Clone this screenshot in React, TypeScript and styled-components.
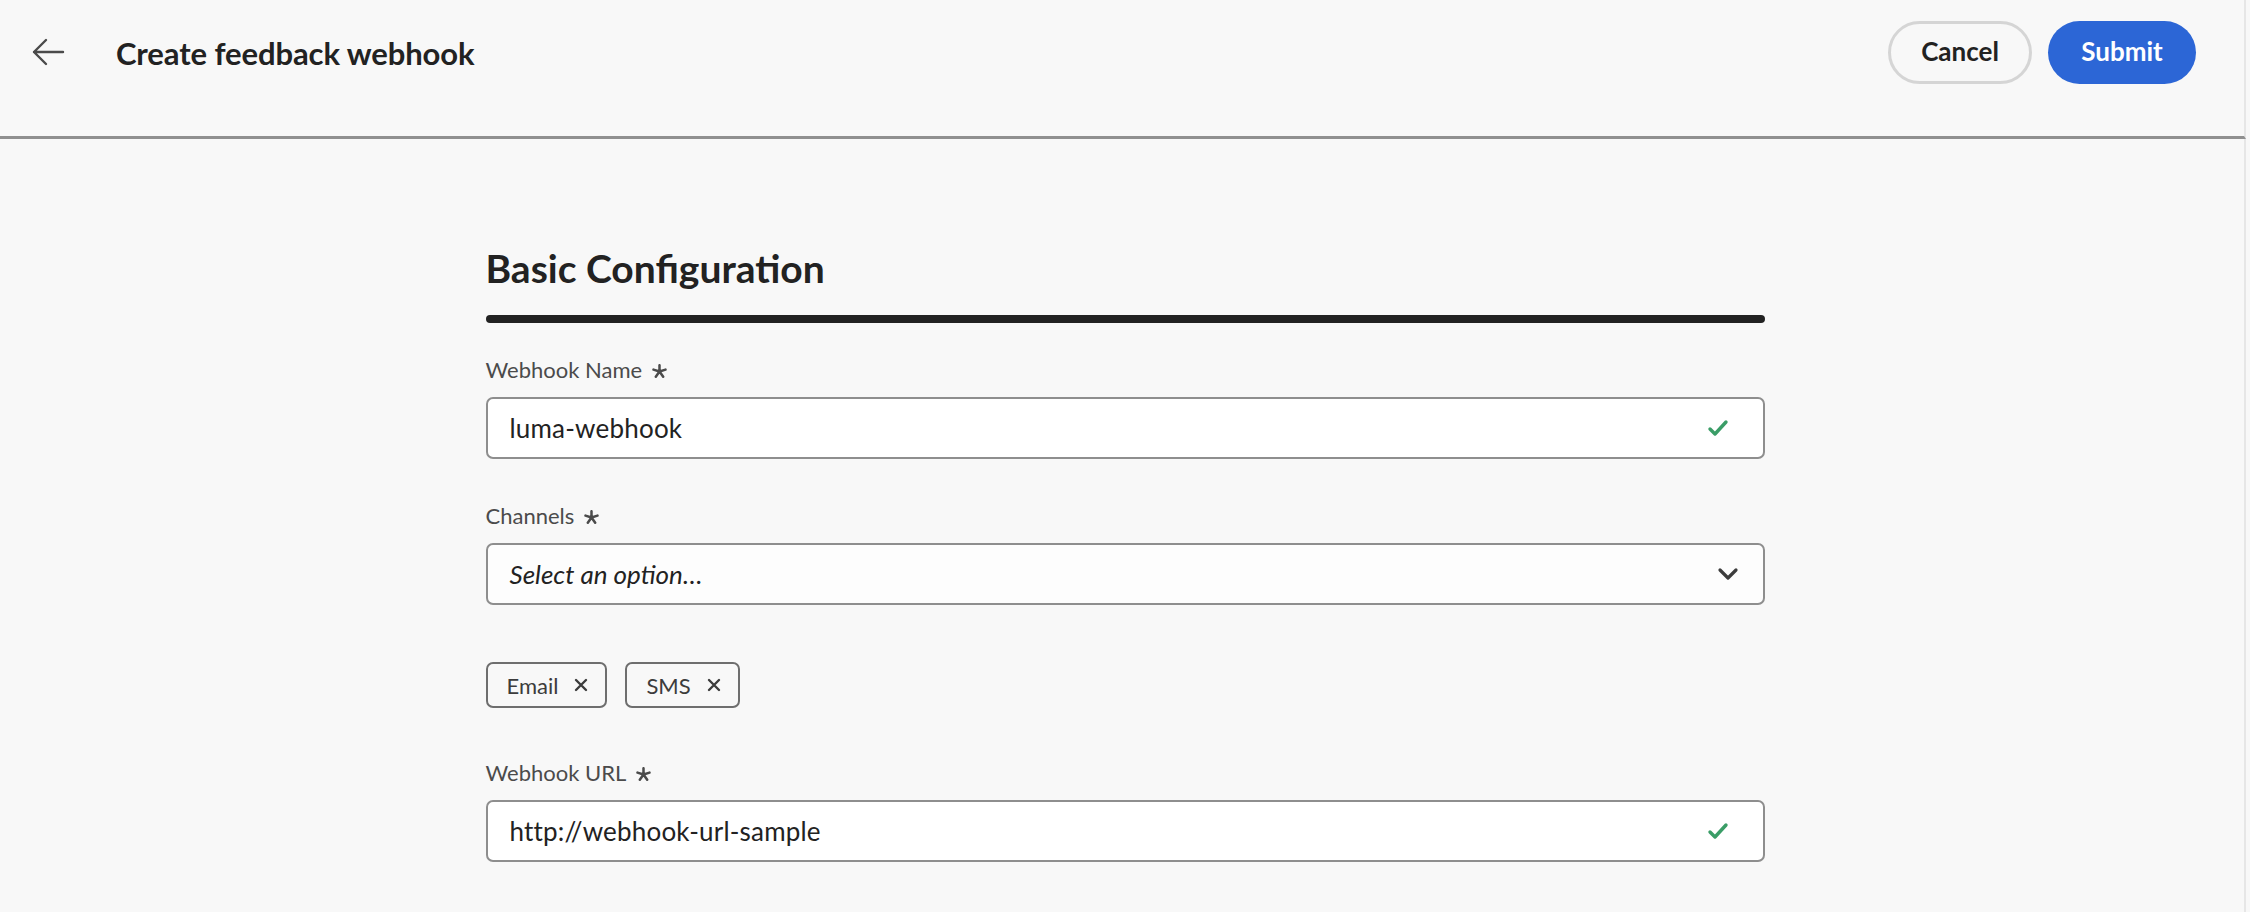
import React, { FC } from "react";
import styled, { createGlobalStyle } from "styled-components";

const GlobalStyle = createGlobalStyle`
  html, body {
    margin: 0;
    padding: 0;
    background: #f8f8f8;
  }
  body {
    font-family: Lato, "Noto Sans", sans-serif;
    color: #222;
  }
  * {
    box-sizing: border-box;
  }
`;

const BackArrow: FC = () => (
  <svg width="34" height="30" viewBox="0 0 34 30" fill="none">
    <path d="M32 15H3M15 3L3 15l12 12" stroke="#4b4b4b" strokeWidth="2.4" strokeLinecap="round" strokeLinejoin="round" />
  </svg>
);

const Check: FC = () => (
  <svg width="22" height="20" viewBox="0 0 22 20" fill="none">
    <path d="M3 11l5 5L19 4" stroke="#3a9d67" strokeWidth="3.4" strokeLinecap="round" strokeLinejoin="round" />
  </svg>
);

const Chevron: FC = () => (
  <svg width="22" height="14" viewBox="0 0 22 14" fill="none">
    <path d="M3 3l8 8 8-8" stroke="#3c3c3c" strokeWidth="3.2" strokeLinecap="round" strokeLinejoin="round" />
  </svg>
);

const Cross: FC = () => (
  <svg width="14" height="14" viewBox="0 0 14 14" fill="none">
    <path d="M2 2l10 10M12 2L2 12" stroke="#3c3c3c" strokeWidth="2.4" strokeLinecap="round" />
  </svg>
);

const Asterisk: FC = () => (
  <svg width="15" height="15" viewBox="0 0 15 15" fill="none">
    <path d="M7.5 1.2v6.3M7.5 7.5L1.5 5.6M7.5 7.5l6-1.9M7.5 7.5l-3.7 5.3M7.5 7.5l3.7 5.3" stroke="#4b4b4b" strokeWidth="2.5" strokeLinecap="round" />
  </svg>
);

type FieldProps = {
  label: string;
  value?: string;
  placeholder?: string;
  select?: boolean;
};

const Field: FC<FieldProps> = ({ label, value, placeholder, select }) => (
  <FieldBlock>
    <Label>
      {label}
      <Asterisk />
    </Label>
    <InputBox $select={select}>
      {value ? <InputText>{value}</InputText> : <Placeholder>{placeholder}</Placeholder>}
      {select ? <Chevron /> : <Check />}
    </InputBox>
  </FieldBlock>
);

const App: FC = () => {
  return (
    <Page>
      <GlobalStyle />
      <Header>
        <HeaderLeft>
          <BackButton>
            <BackArrow />
          </BackButton>
          <Title>Create feedback webhook</Title>
        </HeaderLeft>
        <HeaderActions>
          <CancelButton>Cancel</CancelButton>
          <SubmitButton>Submit</SubmitButton>
        </HeaderActions>
      </Header>
      <Main>
        <Form>
          <SectionTitle>Basic Configuration</SectionTitle>
          <SectionBar />
          <Field label="Webhook Name" value="luma-webhook" />
          <Field label="Channels" placeholder="Select an option…" select />
          <TagRow>
            <Tag>
              Email <Cross />
            </Tag>
            <Tag>
              SMS <Cross />
            </Tag>
          </TagRow>
          <Field label="Webhook URL" value="http://webhook-url-sample" />
        </Form>
      </Main>
    </Page>
  );
};

export default App;

const Page = styled.div`
  width: 100%;
  min-height: 912px;
  padding-right: 4px;
  background: #f8f8f8;
`;

const Header = styled.header`
  height: 139px;
  display: flex;
  align-items: flex-start;
  justify-content: space-between;
  padding: 21px 48px 0 31px;
  border-bottom: 3px solid #909090;
  border-right: 2px solid #e6e6e6;
`;

const HeaderLeft = styled.div`
  display: flex;
  align-items: center;
  height: 63px;
  gap: 51px;
`;

const BackButton = styled.div`
  display: flex;
  align-items: center;
  width: 34px;
  margin-top: -2px;
`;

const Title = styled.h1`
  margin: 0;
  font-size: 31px;
  font-weight: 700;
  color: #222;
  letter-spacing: -0.1px;
`;

const HeaderActions = styled.div`
  display: flex;
  gap: 16px;
`;

const PillButton = styled.button`
  height: 63px;
  border-radius: 32px;
  font-family: Lato, "Noto Sans", sans-serif;
  font-size: 26px;
  font-weight: 700;
  padding: 0 0 3px;
  cursor: pointer;
`;

const CancelButton = styled(PillButton)`
  width: 144px;
  background: transparent;
  border: 3px solid #d5d5d5;
  color: #222;
`;

const SubmitButton = styled(PillButton)`
  width: 148px;
  background: #2c66d6;
  border: none;
  color: #fff;
`;

const Main = styled.main`
  display: flex;
  justify-content: center;
  padding: 105px 0 40px 6px;
  min-height: 773px;
  border-right: 2px solid #e6e6e6;
`;

const Form = styled.div`
  width: 1279px;
  display: flex;
  flex-direction: column;
`;

const SectionTitle = styled.h2`
  margin: 0;
  font-size: 39px;
  line-height: 48px;
  font-weight: 700;
  color: #222;
`;

const SectionBar = styled.div`
  height: 8px;
  margin-top: 23px;
  border-radius: 4px;
  background: #222;
`;

const FieldBlock = styled.div`
  display: flex;
  flex-direction: column;
  gap: 14px;
  margin-top: 34px;

  & + & {
    margin-top: 44px;
  }
`;

const Label = styled.label`
  display: flex;
  align-items: center;
  gap: 10px;
  font-size: 22px;
  line-height: 26px;
  color: #4b4b4b;

  svg {
    margin-top: 3px;
  }
`;

const InputBox = styled.div<{ $select?: boolean }>`
  height: 62px;
  display: flex;
  align-items: center;
  justify-content: space-between;
  padding: 0 ${(p) => (p.$select ? "24px" : "34px")} 0 22px;
  border: 2px solid #8e8e8e;
  border-radius: 7px;
  background: ${(p) => (p.$select ? "#fdfdfd" : "#fff")};
`;

const InputText = styled.span`
  font-size: 26px;
  letter-spacing: 0.2px;
  color: #222;
`;

const Placeholder = styled.span`
  font-size: 26px;
  font-style: italic;
  color: #222;
`;

const TagRow = styled.div`
  display: flex;
  gap: 18px;
  margin-top: 57px;

  & + ${FieldBlock} {
    margin-top: 52px;
  }
`;

const Tag = styled.div`
  height: 46px;
  display: flex;
  align-items: center;
  gap: 16px;
  padding: 0 17px 0 19px;
  border: 2px solid #6e6e6e;
  border-radius: 7px;
  font-size: 22px;
  color: #3c3c3c;
`;
